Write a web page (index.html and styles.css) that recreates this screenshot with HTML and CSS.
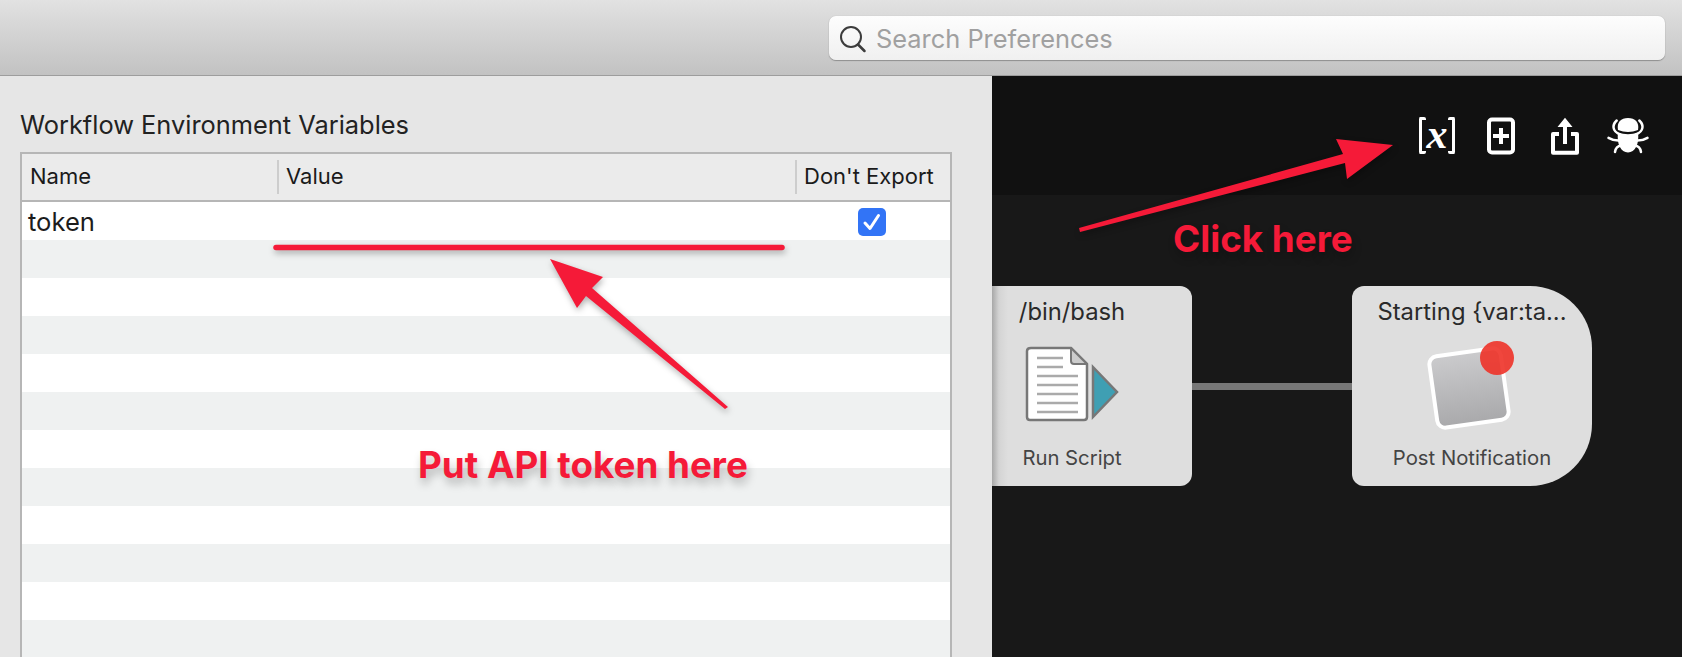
FILE: index.html
```html
<!DOCTYPE html>
<html>
	<head>
		<meta charset="utf-8" />
		<title>Workflow Environment Variables</title>
		<link rel="stylesheet" href="styles.css">
	</head>

	<body>
		<header class="titlebar">
			<div class="search">
				<svg class="search-icon" width="30" height="30" viewBox="0 0 30 30">
					<circle cx="13" cy="13" r="10" fill="none" stroke="#3c3c3c" stroke-width="2" />
					<path d="M20 20.500 L26.500 27" fill="none" stroke="#3c3c3c" stroke-width="2.500" stroke-linecap="round" />
				</svg>
				<span>Search Preferences</span>
			</div>
		</header>

		<main>
			<section class="panel">
				<h2>Workflow Environment Variables</h2>
				<div class="vars">
					<div class="vars-head">
						<div class="th">Name</div>
						<div class="th th-sep">Value</div>
						<div class="th th-sep">Don't Export</div>
					</div>
					<div class="row">
						<div class="name">token</div>
						<div></div>
						<div class="check-cell">
							<svg class="check" width="28" height="28" viewBox="0 0 28 28">
								<rect width="28" height="28" rx="5" fill="#3274f6" />
								<path d="M7 15 L12 20.500 L20.500 7.500" fill="none" stroke="#fff" stroke-width="3" stroke-linecap="round" stroke-linejoin="round" />
							</svg>
						</div>
					</div>
					<div class="row"></div>
					<div class="row"></div>
					<div class="row"></div>
					<div class="row"></div>
					<div class="row"></div>
					<div class="row"></div>
					<div class="row"></div>
					<div class="row"></div>
					<div class="row"></div>
					<div class="row"></div>
					<div class="row"></div>
				</div>
			</section>

			<section class="canvas">
				<div class="toolbar">
					<div class="var-icon"><span>x</span></div>
					<svg width="48" height="40" viewBox="0 0 48 40">
						<rect x="12" y="3.500" width="24" height="33" rx="3" fill="none" stroke="#fff" stroke-width="4" />
						<path d="M24 12 V28 M16 20 H32" stroke="#fff" stroke-width="4" />
					</svg>
					<svg width="48" height="40" viewBox="0 0 48 40">
						<path d="M18 18 H12 V36.800 H36 V18 H30" fill="none" stroke="#fff" stroke-width="4" stroke-linejoin="round" />
						<path d="M24 1.800 L31.500 11 H26 V28 H22 V11 H16.500 Z" fill="#fff" />
					</svg>
					<svg width="48" height="40" viewBox="0 0 48 40">
						<path d="M13 14 C11.500 6 16 2 23 2 C30 2 34.500 6 33 14 Q23 18 13 14 Z" fill="#fff" />
						<path d="M13 16.500 Q23 20 33 16.500 C34.500 28 30 36.500 23 36.500 C16 36.500 11.500 28 13 16.500 Z" fill="#fff" />
						<path d="M11.700 4.500 C7 9 7 15 15 18.500 M34.300 4.500 C39 9 39 15 31 18.500 M3.500 21.800 Q9 25 15 24.500 M42.500 21.800 Q37 25 31 24.500 M10 36 C10.500 32 12 30 16.500 29.500 M36 36 C35.500 32 34 30 29.500 29.500" fill="none" stroke="#fff" stroke-width="2.500" stroke-linecap="round" />
					</svg>
				</div>

				<div class="flow">
					<div class="node node-script">
						<div class="node-title">/bin/bash</div>
						<div class="node-icon">
							<svg width="95" height="78" viewBox="0 0 95 78">
								<path d="M6 2 H46 L62 18 V71 Q62 74 59 74 H5 Q2 74 2 71 V5 Q2 2 6 2 Z" fill="#fff" stroke="#777" stroke-width="2.500" />
								<path d="M46 2 L62 18 H49 Q46 18 46 15 Z" fill="#ccc" stroke="#777" stroke-width="2" stroke-linejoin="round" />
								<path d="M12 12 H38 M12 21 H38 M12 30 H53 M12 39 H53 M12 48 H53 M12 57 H53 M12 66 H53" stroke="#aaa" stroke-width="2.500" />
								<path d="M68 21 L92 46 L68 71 Z" fill="#3f9fb3" stroke="#777" stroke-width="2.500" />
							</svg>
						</div>
						<div class="node-label">Run Script</div>
					</div>
					<div class="wire"></div>
					<div class="node node-output">
						<div class="node-title">Starting {var:ta...</div>
						<div class="node-icon">
							<svg width="100" height="90" viewBox="0 0 100 90">
								<defs>
									<linearGradient id="notif" x1="0" y1="0" x2="0" y2="1">
										<stop offset="0" stop-color="#cbcbcd" />
										<stop offset="1" stop-color="#a9a9ab" />
									</linearGradient>
								</defs>
								<rect x="11" y="12" width="72" height="72" rx="8" fill="url(#notif)" stroke="#fff" stroke-width="4" transform="rotate(-8 47 48)" />
								<circle cx="75" cy="18" r="17" fill="#ee3228" fill-opacity="0.9" />
							</svg>
						</div>
						<div class="node-label">Post Notification</div>
					</div>
				</div>
			</section>
		</main>

		<svg class="marks" width="1682" height="657" viewBox="0 0 1682 657">
			<path d="M276 247.500 H782" stroke="#f51a38" stroke-width="5.500" stroke-linecap="round" />
			<polygon points="550,259 603,277 592,288 728,407 725,409 586,296 577,308" fill="#f51a38" />
			<polygon points="1079,228 1343,154 1336,139 1393,145 1347,179 1345,163 1080,232" fill="#f51a38" />
		</svg>
		<div class="note note-token">Put API token here</div>
		<div class="note note-click">Click here</div>
	</body>
</html>
```
FILE: styles.css
```css
html,
body {
	margin: 0;
	padding: 0;
	height: 657px;
	overflow: hidden;
}

body {
	position: relative;
	background: #e6e6e6;
	color: #222;
	font-family: Inter, "Liberation Sans", sans-serif;
}

.titlebar {
	display: flex;
	justify-content: flex-end;
	align-items: center;
	box-sizing: border-box;
	height: 76px;
	padding: 0 17px 0 0;
	background: linear-gradient(#e2e2e2, #dbdbdb 20%, #c2c2c2);
	border-bottom: 1px solid #9d9d9d;
}

.search {
	display: flex;
	align-items: center;
	box-sizing: border-box;
	width: 836px;
	height: 44px;
	padding: 2px 0 0 9px;
	background: linear-gradient(#fdfdfd, #f0f0f0);
	border-radius: 7px;
	box-shadow: 0 1px 1px #8e8e8e, 0 0 1px #aaa;
	color: #a0a0a0;
	font-size: 25.400px;
}

.search-icon {
	margin-right: 8px;
}

main {
	display: flex;
	height: 581px;
}

.panel {
	flex: none;
	box-sizing: border-box;
	width: 992px;
	padding-left: 20px;
	background: #e6e6e6;
}

.panel h2 {
	margin: 0;
	padding-top: 34px;
	height: 42px;
	line-height: 30px;
	font-size: 25.400px;
	font-weight: 400;
}

.vars {
	box-sizing: border-box;
	width: 932px;
	border: 2px solid #b6b6b6;
	border-bottom: 0;
	background: #fff;
}

.vars-head,
.row {
	display: grid;
	grid-template-columns: 255px 518px 1fr;
}

.vars-head {
	height: 46px;
	background: #ebebeb;
	border-bottom: 2px solid #b6b6b6;
}

.th {
	height: 34px;
	margin-top: 6px;
	padding-left: 8px;
	line-height: 32px;
	font-size: 22px;
	color: #1a1a1a;
	white-space: nowrap;
}

.th-sep {
	border-left: 2px solid #cdcdcd;
	padding-left: 7px;
}

.row {
	height: 38px;
	background: #fff;
}

.row:nth-child(odd) {
	background: #eff1f1;
}

.name {
	padding-left: 6px;
	line-height: 40px;
	font-size: 25.600px;
	color: #1c1c1c;
}

.check-cell {
	display: flex;
	justify-content: center;
	align-items: center;
	padding-right: 2px;
}

.canvas {
	flex: 1;
	background: #181818;
	overflow: hidden;
}

.toolbar {
	display: flex;
	justify-content: flex-end;
	align-items: center;
	gap: 16px;
	height: 119px;
	padding-right: 29px;
	background: #111;
}

.var-icon {
	display: flex;
	justify-content: space-between;
	align-items: center;
	box-sizing: border-box;
	width: 36px;
	height: 37px;
	margin: 0 6px;
	color: #fff;
	font-family: "Liberation Serif", serif;
	font-size: 42px;
	font-style: italic;
	font-weight: 700;
}

.var-icon span {
	line-height: 36px;
	margin-top: -4px;
}

.var-icon::before,
.var-icon::after {
	content: "";
	box-sizing: border-box;
	width: 7px;
	height: 37px;
	border: 3.500px solid #fff;
	border-right: 0;
	border-radius: 2px;
}

.var-icon::after {
	border: 3.500px solid #fff;
	border-left: 0;
}

.flow {
	display: flex;
	align-items: center;
	margin-left: -40px;
	padding-top: 91px;
}

.node {
	display: flex;
	flex-direction: column;
	align-items: center;
	box-sizing: border-box;
	width: 240px;
	height: 200px;
	padding: 12px 0 14px;
	background: #dedede;
	border-radius: 12px;
}

.node-script {
	background: linear-gradient(to right, #a8a8a8 40px, #d4d4d4 47px, #dedede 56px);
}

.node-output {
	border-radius: 12px 62px 62px 12px;
}

.node-title {
	line-height: 28px;
	font-size: 23.800px;
	color: #2a2a2a;
}

.node-icon {
	flex: 1;
	display: flex;
	align-items: center;
	justify-content: center;
}

.node-label {
	line-height: 28px;
	font-size: 20.300px;
	color: #444;
}

.wire {
	width: 160px;
	height: 7px;
	background: #777;
}

.marks {
	position: absolute;
	left: 0;
	top: 0;
	filter: drop-shadow(1px 3px 3px rgba(0, 0, 0, 0.3));
}

.note {
	position: absolute;
	color: #f51a38;
	font-family: Inter, "Liberation Sans", sans-serif;
	font-size: 36.800px;
	font-weight: 700;
	line-height: 44px;
	white-space: nowrap;
	text-shadow: 2px 6px 8px rgba(0, 0, 0, 0.25);
}

.note-token {
	left: 418px;
	top: 443px;
}

.note-click {
	left: 1173px;
	top: 217px;
}
```
